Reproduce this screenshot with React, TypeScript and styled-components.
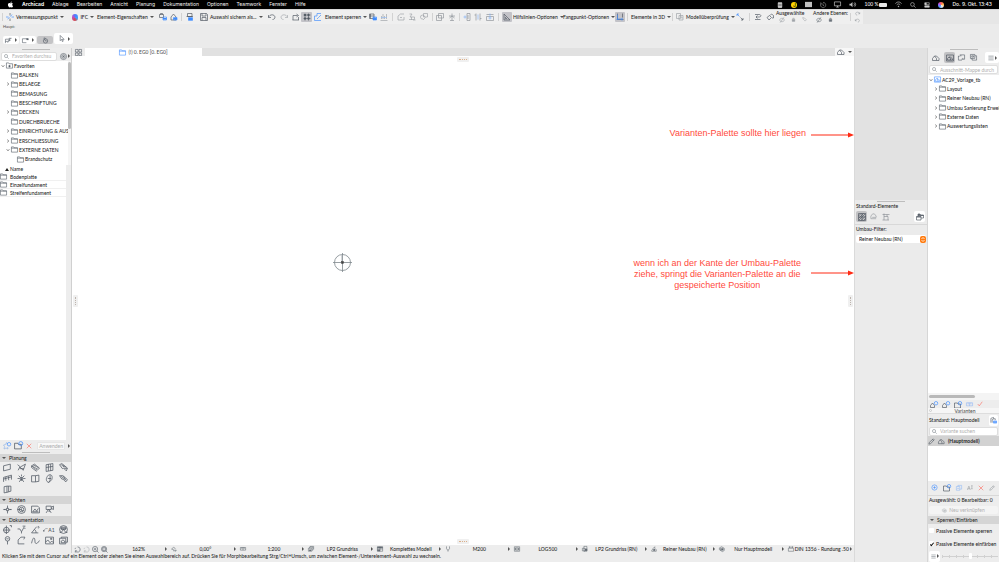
import React from "react";
import styled, { createGlobalStyle, css } from "styled-components";
import { FaApple } from "react-icons/fa";

const BLUE = "#3d8bff";
const RED = "#ff4a3d";
const INK = "#4b545e";

const GlobalStyle = createGlobalStyle`
  *, *::before, *::after { box-sizing: border-box; }
  html, body { margin: 0; height: 100%; overflow: hidden; }
  body { background: #ebebeb; color: #262626; font: 500 5px/6px Lato, "Noto Sans", sans-serif; }
  button, input, select { font: inherit; color: inherit; margin: 0; padding: 0; border: 0; background: none; }
  button { display: flex; align-items: center; white-space: nowrap; }
  ul { list-style: none; margin: 0; padding: 0; }
`;

/* ---------- icons ---------- */

type Glyph = { d?: string; f?: string; a?: string; af?: string };

const plus = "M12 1a3.5 3.5 0 1 1 0 7a3.5 3.5 0 1 1 0-7z";

const glyphs: Record<string, Glyph> = {
  survey: { d: "M8 0v5M8 11v5", a: "M0 8h5M11 8h5M12 3l-3 4M3 12l4-3" },
  link: { d: "M1 3h8v6H1zM3 3V1h4v2", a: "M8 8h7v6H8z", af: "M8 10h7v3H8z" },
  linkHouse: { d: "M2 8l5-6 5 6v6H2z", a: "M7 9h7v5H7z", af: "M7 10h7v3H7z" },
  stack: { d: "M3 1h9v6H3zM1 7h13", a: "M5 9h8v6H5z", af: "M5 10h8v4H5z" },
  save: { d: "M1 1h12l2 2v12H1zM4 1v5h8V1M4 15V9h8v6" },
  undo: { d: "M1 4v5h5M1 9c2-7 12-7 13-1c0 3-2 5-5 5" },
  redo: { d: "M15 4v5h-5M15 9C13 2 3 2 2 8c0 3 2 5 5 5" },
  pick: { d: "M1 14h13M2 14V5h9M9 2l4 3-4 3M13 8v6" },
  grid: { d: "M1 4h14M1 11h14M4 1v14M11 1v14", f: "M2 2h4v4H2zM9 2h4v4H9zM2 9h4v4H2zM9 9h4v4H9z" },
  blueEdit: { a: "M1 15V6h5V1h8M1 15h13M9 9l5-5M6 12l3-3" },
  lock: { d: "M1 2h9v9H1zM3 2v9M1 6h9", a: "M8 8h7v6H8z", af: "M8 9h7v5H8z" },
  chartBars: { d: "M1 15h14M3 12V6M6 12V2M9 12V6M13 12V2", a: "M2 9h12" },
  shape1: { d: "M2 14V6l5-4h7M2 14h12V8M6 9h4" },
  shape2: { d: "M3 2h5l-4 6h9v5H2M7 8v6M10 14h5" },
  shape3: { d: "M7 1h8v7H7zM9 8a4 4 0 1 0-3 4M6 14l5-5" },
  boxes: { d: "M5 1h10v9H5zM1 5h10v10H1z" },
  star: { d: "M8 1v14M2 6h12M4 15h8M3 10l5-4 5 4" },
  alignL: { d: "M8 1h6v14H8zM10 4v8", a: "M1 8h6M4 5v6" },
  alignC: { d: "M4 1v14M12 1v14M1 4h3M12 11h3", a: "M8 3v10" },
  alignR: { d: "M1 7h14v8H1zM1 3h14", a: "M8 1v12M5 10h6" },
  ruler: { d: "M2 2v12h12zM5 8v3h3" },
  snap: { d: "M3 1v12h12M13 1v8", a: "M3 12h11M3 3v9M12 11v4M1 13h4" },
  check3d: { d: "M1 1h8v10H1zM6 5h8v9H6zM9 8h3v3" },
  arrows: { d: "M9 9l5 5M10 14h4v-4", a: "M2 2l5 5M2 6V2h4" },
  layers: { d: "M2 3h8c5 0 5 5 0 5H4M7 5L4 8l3 3M2 13h11" },
  layers2: { d: "M2 9l5-4 4 4-5 5zM8 5l3-3 4 3v5h-3" },
  eye: { d: "M1 8c4-6 10-6 14 0c-4 6-10 6-14 0zM3 15L13 1" },
  padlock: { d: "M4 7h8v7H4zM6 7V4h4v3", f: "M4 8h8v6H4z" },
  tag: { d: "M2 2l6 1 6 6-4 4-6-6z" },
  select: { d: "M1 14V5h7M1 10h6M15 3H9v6l4-2M12 3l-6 10" },
  marquee: { d: "M1 4h12M1 13h9M1 4v9M13 4v3", f: "M10 3h5v4h-5z" },
  timer: { d: "M8 4a5 5 0 1 1 0 10a5 5 0 1 1 0-10zM8 9l-4-7M8 9h3M6 1l2 3" },
  cursor: { d: "M5 1v12l3-3 2 5 2-1-2-4h4z" },
  search: { d: "M6.500 1.500a5 5 0 1 1 0 10a5 5 0 1 1 0-10zM10.500 10.500l4.500 4.500" },
  gear: { d: "M8 1a7 7 0 1 1 0 14a7 7 0 1 1 0-14zM8 4a4 4 0 1 1 0 8a4 4 0 1 1 0-8zM8 6v4M6 8h4" },
  folder: { d: "M1 2h5l1 2h8v10H1zM1 5h14" },
  folderStar: { d: "M1 2h5l1 2h8v10H1zM8 7v5M6 9h4", f: "M6 8h4v4H6z" },
  quad: { d: "M1 1h6v6H1zM9 1h6v6H9zM1 9h6v6H1zM9 9h6v6H9z" },
  house: { d: "M1 13V9l4-5 4 5v4zM5 4h4l5 5v4H9" },
  houseBox: { d: "M1 2h14v12H1zM3 12V9l3-3 3 3v3zM6 6h3l4 4v2H9" },
  layoutBox: { d: "M4 2h11v10H8M1 4v10h8M1 7l3-3h4M11 9v3" },
  copies: { d: "M1 1h10v9H1zM5 10v4h10V4h-4M3 12v-2M4 4h4v3H4z" },
  menu: { d: "M1 3h14M1 8h14M1 13h14" },
  hatch: { d: "M1 1h14v14H1zM1 6l5-5M1 11L11 1M1 15L15 1M6 15l9-9M11 15l4-4M1 8h14M8 1v14" },
  demo: { d: "M2 13V7l4-5h4l4 5v3M2 13h12M5 10h9" },
  crane: { d: "M1 3h14M4 1v13M4 7h8v7M1 14h13M10 3v4" },
  folders: { d: "M1 7h9v7H1zM4 7V2h4l1 2h6v6h-5", f: "M1 7h9v2H1zM4 2h4l1 2h6v2H4z" },
  wall: { d: "M1 5l12-3v9L1 14z" },
  beam: { d: "M1 3l5 4 9-5-4 11-6-6-3 6M5 10h7" },
  slab: { d: "M1 5l5-3 9 7-4 4zM1 5v3l9 7M3 6l5-2M6 8l4-2M9 10l4-2" },
  window: { d: "M2 3l12-2v12L2 15zM6 2v12M10 2v12M2 8l12-2" },
  stair: { d: "M1 3l4-2 10 8-2 5L8 9 6 10zM4 3l5 4M7 3l5 5M9 9l5 1" },
  fence: { d: "M1 14V6l14-4v8M5 12V5M10 11V4M1 9l14-4" },
  lamp: { d: "M8 6v5M3 3l3 3M13 3l-3 3M1 8h4M11 8h4M8 1v3M4 14l2-3h4l2 3M6 6h4v4H6z" },
  door: { d: "M1 3h7v11H1zM8 3l6-1v11l-6 1" },
  shell: { d: "M6 2c6-3 8 3 6 8l-5 5c-6-1-6-8-1-13zM9 2v9l-2 4M5 8h6" },
  roof: { d: "M1 3h6l8 7-3 4-5-5H5zM4 4l7 6M8 4l4 7" },
  corner: { d: "M2 3l5-1v11l-5 1zM7 2h7v9l-7 2M10 2v10" },
  section: { d: "M8 1v5M8 10v5M1 8h5M10 8h5M6 6h4v4H6zM2 7v2M14 7v2" },
  spiral: { d: "M8 1a7 7 0 1 1 0 14a7 7 0 1 1 0-14zM8 4a4 4 0 1 1 0 8a4 4 0 1 1 0-8M1 8h6M8 6v4h3" },
  elevation: { d: "M1 2h11l3 3v9H1zM3 12l4-5 3 4 3-5M3 12h10" },
  camera: { d: "M2 2h9v6H2zM11 4l4-2v6l-4-2M6 8l-4 6M7 8l4 6M6 11h3" },
  target: { d: "M6 4a5 5 0 1 1 0 10a5 5 0 1 1 0-10zM6 1v15M0 9h13M12 1h3v3" },
  level: { d: "M1 7h4l3 5 5-9M8 12v3M10 2h5M13 6h2" },
  angle: { d: "M1 14L10 3M1 14h12M9 14c0-3-1-5-3-6M12 3c3-2 3 4 0 2" },
  zone: { d: "M1 13h3l4-5 4 5h3M3 6h10M8 1a7 7 0 1 1 0 14a7 7 0 1 1 0-14zM4 4h8v4H4z" },
  label: { d: "M1 12l8-7h6", f: "M0 10h5v4H0z" },
  pin: { d: "M8 1a4 4 0 1 1 0 8a4 4 0 1 1 0-8zM8 9v6M6 5h4" },
  poly: { d: "M2 14V7l5-5h7M2 14h11M14 2l-2 4" },
  spline: { d: "M1 13c3-14 6-10 6-4s4 6 8-1" },
  figure: { d: "M1 2h14v12H1zM1 11l4-4 4 5 3-3 3 3M10 4h2v2h-2z" },
  drawing: { d: "M1 4h11v10H1zM4 4V2h11v9h-3M4 12V9l3-2 3 2v3z" },
  star2: { d: "M2 14l1-5-2-3 4-1 2-4 2 4M2 14l4-2 4 2-1-4", a: plus },
  folderPlus: { d: "M1 4h6l1 2h5v8H1z", a: plus },
  cross: { d: "M2 2l12 12M14 2L2 14" },
  zoomUndo: { d: "M8 2a6 6 0 1 1-5 9M3 11v4M3 11h4M4 4L2 7" },
  zoomIn: { d: "M7 1a6 6 0 1 1 0 12a6 6 0 1 1 0-12zM11 11l4 4M7 4v6M4 7h6" },
  zoomFit: { d: "M7 1a6 6 0 1 1 0 12a6 6 0 1 1 0-12zM11 11l4 4M4 4h6v6H4z" },
  rotate: { d: "M2 9c2-7 9-7 9 0M2 9h4M8 13l6-2-2 4M7 9v5" },
  scale: { d: "M1 4h14v7H1zM5 4v4M11 4v4M8 4v7" },
  sheets: { d: "M1 6h9v8H1zM4 6V3h9v8h-3M6 3V1h9v8", f: "M3 9h5v4H3z" },
  table: { d: "M1 2h14v12H1zM1 8h14M8 2v12", f: "M1 2h14v4H1zM1 9h7v5H1z" },
  pen: { d: "M4 1v6l3 4h2l3-4V1M8 11v4" },
  book: { d: "M1 2h14v12H1zM4 5h8v6H4zM1 8h14" },
  lockDoc: { d: "M5 1h8v13H5zM1 6h7v7H1z", f: "M8 7h6v6H8z" },
  hook: { d: "M2 14h12v-4l-4-4V2L6 6l-4 6z", f: "M6 8h5v5H6z" },
  leaf: { d: "M1 5l6-3 7 4v6l-5 3-8-5zM4 6h7v5H4z", f: "M6 7h5v4H6z" },
  dim: { d: "M1 6h14v8H1zM4 1v4M12 1v4M2 3h12" },
  pencil: { d: "M2 14l1-4 9-8 2 2-8 9zM10 3l3 3" },
  plusCircle: { a: "M8 2a6 6 0 1 1 0 12a6 6 0 1 1 0-12zM8 5v6M5 8h6" },
  dup: { a: "M1 4h9v10H1zM5 4V1h10v10h-5M3 9h5" },
  rename: { d: "M1 13l4-10 4 10M2 10h6M11 2h4M13 2v8M11 10h4" },
  housePlus: { d: "M1 13V9l4-5 4 5v4z", a: plus },
  copyPlus: { d: "M2 13V3l6-2v3M5 13V6l4-2h3v3", a: "M8 9h7v5H8z", af: "M8 10h7v3H8z" },
  monitor: { d: "M1 2h14v9H1zM5 14h6M8 11v3" },
  clock: { d: "M8 1a7 7 0 1 1-6 4M8 4v5l3 1M2 1v4h4" },
  volume: { d: "M11 5c2 2 2 4 0 6M13 3c3 3 3 7 0 10", f: "M1 6h3l4-4v12l-4-4H1z" },
  wifi: { d: "M1 6c4-5 10-5 14 0M4 9c3-3 5-3 8 0M7 12h2v1H7z" },
  control: { d: "M2 2h12v5H2zM2 10h12v4H2z", f: "M2 10h12v4H2zM2 2h5v5H2z" },
  disk: { d: "M3 2h10v12H3z", f: "M3 1h10v4H3zM3 6h10v3H3zM3 10h10v5H3z" },
  keyboard: { f: "M0 2h16v12H0z" },
  tick: { d: "M2 8l4 5 8-11" },
};

const Svg = styled.svg<{ $c?: string; $o?: number; $s: number }>`
  flex: none;
  display: block;
  width: ${(p) => p.$s}px;
  height: ${(p) => p.$s}px;
  color: ${(p) => p.$c || INK};
  opacity: ${(p) => p.$o ?? 1};
  overflow: visible;
`;

function Icon({ n, s = 8, c, o }: { n: string; s?: number; c?: string; o?: number }) {
  const g = glyphs[n];
  return (
    <Svg viewBox="0 0 16 16" $s={s} $c={c} $o={o} fill="none" strokeWidth={1.3} aria-hidden>
      {g.f && <path d={g.f} fill="currentColor" opacity={0.8} />}
      {g.d && <path d={g.d} stroke="currentColor" />}
      {g.af && <path d={g.af} fill={BLUE} />}
      {g.a && <path d={g.a} stroke={BLUE} />}
    </Svg>
  );
}

const Caret = styled.i<{ $right?: boolean }>`
  flex: none;
  width: 0;
  height: 0;
  border: solid transparent;
  ${(p) =>
    p.$right
      ? css`border-width: 2px 0 2px 2px; border-left-color: #555;`
      : css`border-width: 2px 2px 0 2px; border-top-color: #555;`}
`;

/* ---------- menu bar ---------- */

const Page = styled.div`
  height: 100vh;
  display: flex;
  flex-direction: column;
  overflow: hidden;
`;
const MenuBar = styled.header`
  flex: none;
  height: 9px;
  padding: 0 7px;
  display: flex;
  align-items: center;
  justify-content: space-between;
  background: #000;
  color: #f4f4f4;
  font-family: Inter, sans-serif;
  line-height: 9px;
`;
const Menus = styled.nav`
  display: flex;
  align-items: center;
  gap: 8px;
`;
const MenuItem = styled.button<{ $bold?: boolean }>`
  font-weight: ${(p) => (p.$bold ? 700 : 400)};
`;
const Tray = styled.div`
  display: flex;
  align-items: center;
  gap: 8px;
`;
const Badge = styled.span`
  width: 6px;
  height: 6px;
  border-radius: 50%;
  background: #ffd500;
  color: #000;
  line-height: 6px;
  text-align: center;
`;
const Charge = styled.span`
  display: flex;
  align-items: center;
  gap: 1px;
  font-family: Lato, sans-serif;
`;
const Battery = styled.i`
  width: 8px;
  height: 4px;
  border-radius: 1px;
  background: #e8e8e8;
`;
const Orb = styled.i`
  width: 6px;
  height: 6px;
  border-radius: 50%;
  background: conic-gradient(#ff5a5a, #ffb54a, #f5f5f5, #4aa8ff, #a45cff, #ff5a5a);
`;

const menus = ["Ablage", "Bearbeiten", "Ansicht", "Planung", "Dokumentation", "Optionen", "Teamwork", "Fenster", "Hilfe"];

function TopMenu() {
  return (
    <MenuBar>
      <Menus>
        <FaApple size={7} color="#fff" />
        <MenuItem $bold>Archicad</MenuItem>
        {menus.map((m) => (
          <MenuItem key={m}>{m}</MenuItem>
        ))}
      </Menus>
      <Tray>
        <Icon n="disk" s={6} c="#eee" />
        <Badge>J</Badge>
        <Icon n="keyboard" s={7} c="#eee" />
        <Icon n="clock" s={6} c="#bbb" />
        <Icon n="monitor" s={7} c="#eee" />
        <Icon n="volume" s={7} c="#eee" />
        <Charge>
          100 %<Battery />
        </Charge>
        <Icon n="wifi" s={7} c="#eee" />
        <Icon n="search" s={6} c="#eee" />
        <Icon n="control" s={6} c="#eee" />
        <Orb />
        <time>Do. 9. Okt. 13:43</time>
      </Tray>
    </MenuBar>
  );
}

/* ---------- toolbar ---------- */

const Toolbar = styled.div`
  flex: none;
  height: 15px;
  display: flex;
  align-items: center;
  background: #e6e6e6;
  border-top: 1px solid #d8d8d8;
`;
const ToolStrip = styled.div`
  display: flex;
  align-items: center;
  height: 14px;
  padding-right: 3px;
  background: #efefef;
`;
const ToolCell = styled.button<{ $w: number; $on?: boolean; $label?: boolean }>`
  flex: none;
  width: ${(p) => p.$w}px;
  height: 10px;
  gap: 2px;
  justify-content: ${(p) => (p.$label ? "flex-start" : "center")};
  border-radius: 1px;
  background: ${(p) => (p.$on ? "#c3c3c8" : "transparent")};
  ${Caret} { margin-left: auto; }
`;
const Rule = styled.i<{ $w: number }>`
  flex: none;
  width: ${(p) => p.$w}px;
  height: 8px;
  background: linear-gradient(#d2d2d2, #d2d2d2) center / 1px 100% no-repeat;
`;
const Space = styled.i<{ $w: number }>`
  flex: none;
  width: ${(p) => p.$w}px;
`;
const Layered = styled.div<{ $w: number }>`
  flex: none;
  width: ${(p) => p.$w}px;
  height: 14px;
  line-height: 6px;
  white-space: nowrap;
`;
const LayeredIcons = styled.div`
  display: flex;
  padding-left: 3px;
  gap: 6px;
  margin-top: 1px;
`;
const Turns = styled.div`
  display: flex;
  flex-direction: column;
  gap: 2px;
  padding-left: 3px;
`;
const IfcDot = styled.i`
  width: 7px;
  height: 7px;
  border-radius: 50%;
  background: conic-gradient(#4d7dff, #38a5ff 30%, #d84a4a 50%, #c04fc7 80%, #4d7dff);
`;

type Tool = { k: "i" | "t" | "r" | "s"; w: number; n?: string; t?: string; on?: boolean; o?: number };
const i = (n: string, w = 12, o = 1, on = false): Tool => ({ k: "i", n, w, o, on });
const t = (text: string, w: number, n?: string): Tool => ({ k: "t", t: text, w, n });
const r = (w = 4): Tool => ({ k: "r", w });
const s = (w: number): Tool => ({ k: "s", w });

const tools: Tool[] = [
  r(4), s(2), t("Vermessungspunkt", 56, "survey"), s(10),
  t("IFC", 22, "ifc"), s(3), t("Element-Eigenschaften", 54), s(6),
  i("link"), i("linkHouse", 10), r(5), i("stack"), s(4), t("Auswahl sichern als...", 60, "save"), s(6),
  i("undo"), i("redo", 12, 0.45), i("pick", 11), i("grid", 11, 1, true), i("blueEdit"), s(1),
  t("Element sperren", 40), s(2), i("lock", 11), i("chartBars", 12, 0.5), r(5),
  i("shape1", 11, 0.5), i("shape2", 12, 0.5), i("shape3", 12, 0.5), r(4),
  i("boxes", 12, 0.6), i("star", 11, 0.6), r(4), i("alignL", 11, 0.6), i("alignC", 12, 0.6), i("alignR", 12, 0.6), r(5), s(1),
  i("ruler", 10, 1, true), s(1), t("Hilfslinien-Optionen", 48), s(2), t("Fangpunkt-Optionen", 49), s(3),
  i("snap", 10, 1, true), r(5), s(1), t("Elemente in 3D", 37), r(8), t("Modellüberprüfung", 56, "check3d"), s(2), i("arrows"), r(6),
  i("layers"), i("layers2", 11), s(1),
];

function ToolView({ tool }: { tool: Tool }) {
  if (tool.k === "r") return <Rule $w={tool.w} />;
  if (tool.k === "s") return <Space $w={tool.w} />;
  if (tool.k === "i")
    return (
      <ToolCell $w={tool.w} $on={tool.on} aria-label={tool.n}>
        <Icon n={tool.n!} s={8} o={tool.o} />
      </ToolCell>
    );
  return (
    <ToolCell $w={tool.w} $label>
      {tool.n === "ifc" ? <IfcDot /> : tool.n && <Icon n={tool.n} s={8} o={tool.n === "check3d" ? 0.5 : 1} />}
      {tool.t}
      <Caret />
    </ToolCell>
  );
}

const MainTools = styled.section`
  flex: none;
  height: 24px;
  color: #555;
`;
const MainTitle = styled.div`
  padding-left: 3px;
  font-size: 4px;
  line-height: 6px;
`;
const MainRow = styled.div`
  display: flex;
  align-items: center;
  gap: 1px;
  padding: 2px 0 0 3px;
  height: 18px;
`;
const ModeButton = styled.button<{ $on?: boolean; $tall?: boolean }>`
  width: ${(p) => (p.$tall ? 19 : 16)}px;
  height: ${(p) => (p.$tall ? 11 : 8)}px;
  justify-content: center;
  gap: 3px;
  border-radius: 2px;
  background: ${(p) => (p.$on ? "#c4c4c6" : "#fff")};
  margin-bottom: ${(p) => (p.$tall ? 3 : 0)}px;
`;

/* ---------- shared palette parts ---------- */

const Workspace = styled.main`
  flex: 1;
  min-height: 0;
  display: grid;
  grid-template-columns: minmax(0, 1fr) 73px 72px;
`;
const Grip = styled.i`
  flex: none;
  display: block;
  width: 28px;
  height: 1px;
  margin: 1px auto;
  background: #bdbdbd;
`;
const SearchBox = styled.label`
  flex: 1;
  min-width: 0;
  height: 9px;
  display: flex;
  align-items: center;
  gap: 3px;
  padding: 0 2px;
  border: 1px solid #dedede;
  border-radius: 2px;
  background: #fff;
`;
const SearchInput = styled.input`
  flex: 1;
  min-width: 0;
  height: 7px;
  outline: none;
  font-weight: 400;
  &::placeholder { color: #aeaeae; opacity: 1; }
`;
const Bar = styled.div<{ $pad?: string; $gap?: number; $h: number }>`
  flex: none;
  display: flex;
  align-items: center;
  gap: ${(p) => p.$gap ?? 2}px;
  padding: ${(p) => p.$pad ?? "0 1px"};
  height: ${(p) => p.$h}px;
  white-space: nowrap;
`;
const SectionHead = styled.button`
  flex: none;
  width: 100%;
  height: 8px;
  gap: 3px;
  padding-left: 2px;
  background: #d5d5d5;
`;
const IconButton = styled.button<{ $on?: boolean; $white?: boolean; $w?: number }>`
  width: ${(p) => p.$w ?? 11}px;
  height: 11px;
  justify-content: center;
  gap: 1px;
  border-radius: 2px;
  background: ${(p) => (p.$on ? "#c2c2c4" : p.$white ? "#fff" : "transparent")};
`;

const TreeRow = styled.li<{ $level: number }>`
  flex: 1;
  display: flex;
  align-items: center;
  gap: 1px;
  min-height: 0;
  padding-left: ${(p) => [1, 6, 12][p.$level]}px;
  white-space: nowrap;
`;
const Turn = styled.svg<{ $open?: boolean; $none?: boolean }>`
  flex: none;
  width: 4px;
  height: 4px;
  visibility: ${(p) => (p.$none ? "hidden" : "visible")};
  transform: rotate(${(p) => (p.$open ? 90 : 0)}deg);
`;

type Node = { t: string; lvl: number; st?: "open" | "closed"; n?: string };

function Tree({ nodes }: { nodes: Node[] }) {
  return (
    <>
      {nodes.map((x) => (
        <TreeRow key={x.t} $level={x.lvl}>
          <Turn viewBox="0 0 4 4" $open={x.st === "open"} $none={!x.st} fill="none" stroke="#666" strokeWidth="0.6" aria-hidden>
            <path d="M1 0.500L3 2 1 3.500" />
          </Turn>
          <Icon n={x.n ?? "folder"} s={7} c={x.n === "houseBox" ? BLUE : undefined} />
          {x.t}
        </TreeRow>
      ))}
    </>
  );
}

/* ---------- left palette ---------- */

const DrawArea = styled.div`
  display: flex;
  flex-direction: column;
  min-height: 0;
`;
const DrawRow = styled.div`
  flex: 1;
  min-height: 0;
  display: grid;
  grid-template-columns: 72px minmax(0, 1fr);
`;
const Left = styled.aside`
  display: flex;
  flex-direction: column;
  min-height: 0;
  padding-bottom: 6px;
  border-right: 1px solid #d0d0d0;
  background: #ededed;
`;
const TreeFrame = styled.div`
  flex: none;
  height: 104px;
  display: flex;
  background: #fff;
`;
const TreeList = styled.ul`
  flex: 1;
  min-width: 0;
  height: 103px;
  display: flex;
  flex-direction: column;
`;
const ScrollTrack = styled.div`
  width: 3px;
  padding: 1px 0 0;
  background: #f5f5f5;
`;
const ScrollThumb = styled.i`
  display: block;
  width: 3px;
  height: 67px;
  border-radius: 2px;
  background: #bcbcbc;
`;
const FileList = styled.div`
  flex: 1;
  min-height: 0;
  margin-right: 5px;
  background: #fff;
`;
const NameHead = styled.div`
  display: flex;
  align-items: center;
  gap: 1px;
  height: 8px;
  padding-left: 5px;
`;
const UpMark = styled.i`
  border: solid transparent;
  border-width: 0 2px 3px;
  border-bottom-color: #222;
`;
const FileRow = styled.div`
  display: flex;
  align-items: center;
  gap: 3px;
  height: 8px;
  border-bottom: 1px solid #f0f0f0;
`;
const ApplyButton = styled.button`
  height: 8px;
  padding: 0 1px;
  margin-left: auto;
  border: 1px solid #e6e6e6;
  border-radius: 1px;
  background: #f9f9f9;
  color: #b0b0b0;
`;
const ToolGrid = styled.div<{ $rows: number }>`
  flex: none;
  display: grid;
  grid-template-columns: repeat(5, 14px);
  grid-auto-rows: 11px;
  height: ${(p) => p.$rows * 11 + 1}px;
`;
const ToolTile = styled.button`
  justify-content: center;
  height: 11px;
  color: ${INK};
`;

const favorites: Node[] = [
  { t: "Favoriten", lvl: 0, st: "open", n: "folderStar" },
  { t: "BALKEN", lvl: 1 },
  { t: "BELAEGE", lvl: 1, st: "closed" },
  { t: "BEMASUNG", lvl: 1 },
  { t: "BESCHRIFTUNG", lvl: 1 },
  { t: "DECKEN", lvl: 1, st: "closed" },
  { t: "DURCHBRUECHE", lvl: 1 },
  { t: "EINRICHTUNG & AUS", lvl: 1, st: "closed" },
  { t: "ERSCHLIESSUNG", lvl: 1, st: "closed" },
  { t: "EXTERNE DATEN", lvl: 1, st: "open" },
  { t: "Brandschutz", lvl: 2 },
];

const toolSets = [
  { title: "Planung", rows: 3, items: ["wall", "beam", "slab", "window", "stair", "fence", "lamp", "door", "shell", "roof", "corner"] },
  { title: "Sichten", rows: 1, items: ["section", "spiral", "elevation", "camera"] },
  { title: "Dokumentation", rows: 2, items: ["target", "level", "angle", "label", "zone", "pin", "poly", "spline", "figure", "drawing"] },
];

function LeftPalette() {
  return (
    <Left>
      <Grip />
      <Bar $h={10}>
        <SearchBox>
          <Icon n="search" s={5} />
          <SearchInput placeholder="Favoriten durchsu" aria-label="Favoriten durchsuchen" />
        </SearchBox>
        <IconButton aria-label="Einstellungen">
          <Icon n="gear" s={7} />
          <Caret $right />
        </IconButton>
      </Bar>
      <TreeFrame>
        <TreeList>
          <Tree nodes={favorites} />
        </TreeList>
        <ScrollTrack>
          <ScrollThumb />
        </ScrollTrack>
      </TreeFrame>
      <FileList>
        <NameHead>
          <UpMark />
          Name
        </NameHead>
        {["Bodenplatte", "Einzelfundament", "Streifenfundament"].map((f) => (
          <FileRow key={f}>
            <Icon n="folder" s={7} />
            {f}
          </FileRow>
        ))}
      </FileList>
      <Bar $h={11} $pad="0 1px 0 3px" $gap={3}>
        <Icon n="star2" s={8} c="#8fb3e6" />
        <Icon n="folderPlus" s={9} />
        <Icon n="cross" s={6} c={RED} />
        <ApplyButton>Anwenden</ApplyButton>
        <Caret $right />
      </Bar>
      <Grip />
      {toolSets.map((set) => (
        <React.Fragment key={set.title}>
          <SectionHead>
            <Caret />
            {set.title}
          </SectionHead>
          <ToolGrid $rows={set.rows}>
            {set.items.map((n) => (
              <ToolTile key={n} aria-label={n}>
                <Icon n={n} s={n === "label" ? 5 : 9} />
                {n === "label" && "A1"}
              </ToolTile>
            ))}
          </ToolGrid>
        </React.Fragment>
      ))}
    </Left>
  );
}

/* ---------- drawing canvas ---------- */

const Center = styled.section`
  display: flex;
  flex-direction: column;
  min-height: 0;
  min-width: 0;
`;
const Tabs = styled.div`
  flex: none;
  height: 8px;
  display: flex;
  background: #e1e1e1;
`;
const TabIcons = styled.button`
  width: 13px;
  justify-content: center;
  background: #ececec;
`;
const Tab = styled.button`
  width: 117px;
  justify-content: center;
  gap: 2px;
  background: #fff;
  color: #555;
`;
const TabEnd = styled.button`
  width: 19px;
  margin-left: auto;
  gap: 3px;
  justify-content: center;
  background: #f7f7f7;
`;
const Sheet = styled.div`
  flex: 1;
  min-height: 0;
  position: relative;
  background: #fff;
`;
const Handle = styled.i<{ $side: "top" | "bottom" | "left" | "right" }>`
  position: absolute;
  border-radius: 1px;
  background: #f0f0f0;
  ${(p) => p.$side}: 1px;
  ${(p) =>
    p.$side === "top" || p.$side === "bottom"
      ? css`left: 50%; width: 12px; height: 5px; margin-left: -6px;`
      : css`top: 50%; width: 5px; height: 12px; margin-top: -6px;`}
  &::after {
    content: "";
    position: absolute;
    inset: 2px;
    ${(p) =>
      p.$side === "top" || p.$side === "bottom"
        ? css`border-top: 1px dotted #dcb08a;`
        : css`border-left: 1px dotted #bdb4ad;`}
  }
`;
const Origin = styled.svg`
  position: absolute;
  left: 260px;
  top: 196px;
  width: 20px;
  height: 20px;
`;
const Note = styled.div<{ $top: number; $center?: boolean }>`
  position: absolute;
  right: 0;
  top: ${(p) => p.$top}px;
  display: flex;
  align-items: center;
  gap: ${(p) => (p.$center ? 10 : 5)}px;
  color: ${RED};
  font: 400 9px/11px "Liberation Sans", Arial, sans-serif;
  white-space: pre-line;
  text-align: center;
`;
const NoteArrow = styled.svg<{ $up?: boolean }>`
  width: 43px;
  height: 6px;
  margin: ${(p) => (p.$up ? "0 0 3px" : "3px 0 0")};
`;

function RedArrow({ up }: { up?: boolean }) {
  return (
    <NoteArrow viewBox="0 0 43 6" $up={up} aria-hidden>
      <path d="M0 3h38" stroke="#ff2b14" strokeWidth="1.2" />
      <path d="M37 0.500l6 2.500-6 2.500z" fill="#ff2b14" />
    </NoteArrow>
  );
}

const Status = styled.div`
  flex: none;
  height: 8px;
  display: flex;
  align-items: center;
  background: #ededed;
`;
const ZoomTools = styled.div`
  width: 38px;
  display: flex;
  gap: 2px;
  padding-left: 2px;
`;
const StatusCell = styled.button<{ $grow: number }>`
  flex: ${(p) => p.$grow} 1 0;
  min-width: 0;
  height: 8px;
  padding: 0 2px;
`;
const StatusText = styled.span`
  flex: 1;
  text-align: center;
`;
const Hint = styled.footer`
  flex: none;
  height: 9px;
  padding-left: 2px;
  white-space: nowrap;
  background: #ededed;
`;

const statuses: [string, string][] = [
  ["rotate", "0,00°"],
  ["scale", "1:200"],
  ["sheets", "LP2 Grundriss"],
  ["table", "Komplettes Modell"],
  ["pen", "M200"],
  ["book", "LOG500"],
  ["lockDoc", "LP2 Grundriss (RN)"],
  ["hook", "Reiner Neubau (RN)"],
  ["leaf", "Nur Hauptmodell"],
  ["dim", "DIN 1356 - Rundung .50"],
];

function Canvas() {
  return (
    <Center>
      <Tabs>
        <TabIcons aria-label="Übersicht">
          <Icon n="quad" s={7} />
        </TabIcons>
        <Tab>
          <Icon n="folder" s={7} c={BLUE} />
          (!) 0. EG0 [0. EG0]
        </Tab>
        <TabEnd aria-label="Ansicht">
          <Icon n="house" s={8} />
          <Caret />
        </TabEnd>
      </Tabs>
      <Sheet>
        <Handle $side="top" />
        <Handle $side="bottom" />
        <Handle $side="left" />
        <Handle $side="right" />
        <Origin viewBox="0 0 20 20" fill="none" stroke="#7d868c">
          <circle cx="10.500" cy="10.500" r="8" strokeWidth="0.8" />
          <path d="M1 10.500h19M10.500 1v19" strokeWidth="0.8" />
          <path d="M9.500 2v8" stroke="#b5bbbf" strokeWidth="0.6" />
          <rect x="9.500" y="9.500" width="2" height="2" fill="#444" stroke="#444" strokeWidth="0.5" />
        </Origin>
        <Note $top={72}>
          Varianten-Palette sollte hier liegen
          <RedArrow />
        </Note>
        <Note $top={202} $center>
          {"wenn ich an der Kante der Umbau-Palette\nziehe, springt die Varianten-Palette an die\ngespeicherte Position"}
          <RedArrow up />
        </Note>
      </Sheet>
      <Status>
        <ZoomTools>
          <Icon n="zoomUndo" s={7} />
          <Icon n="zoomUndo" s={7} o={0.4} />
          <Icon n="zoomIn" s={7} />
          <Icon n="zoomFit" s={7} />
        </ZoomTools>
        <StatusCell $grow={59}>
          <StatusText>162%</StatusText>
          <Caret $right />
        </StatusCell>
        {statuses.map(([n, label]) => (
          <StatusCell key={label} $grow={69}>
            <Icon n={n} s={6} />
            <StatusText>{label}</StatusText>
            <Caret $right />
          </StatusCell>
        ))}
      </Status>
    </Center>
  );
}

/* ---------- renovation palette ---------- */

const Dock = styled.aside`
  display: flex;
  flex-direction: column;
  background: #ebebeb;
  border-left: 1px solid #dadada;
`;
const DockGap = styled.div`
  flex: none;
  height: 152px;
  background: #e2e2e2;
`;
const Caption = styled.h2`
  flex: none;
  margin: 0;
  padding: 0 1px;
  font: inherit;
  line-height: 7px;
  white-space: nowrap;
`;
const Divider = styled.hr`
  flex: none;
  width: 100%;
  height: 1px;
  margin: 1px 0;
  border: 0;
  background: #d8d8d8;
`;
const FilterField = styled.div`
  display: flex;
  align-items: center;
  height: 8px;
  margin: 2px 1px;
  border-radius: 2px;
  background: #fff;
  padding: 0 0 0 3px;
`;
const FilterSelect = styled.select`
  flex: 1;
  min-width: 0;
  height: 8px;
  appearance: none;
  outline: none;
`;
const Stepper = styled.svg`
  width: 6px;
  height: 7px;
  border-radius: 2px;
  background: #ff7b0f;
`;
const Push = styled.span`
  margin-left: auto;
`;

function Renovation() {
  return (
    <Dock>
      <DockGap />
      <Grip />
      <Caption>Standard-Elemente</Caption>
      <Bar $gap={1} $h={13} $pad="0 2px 0 1px">
        <IconButton $on aria-label="Bestand">
          <Icon n="hatch" s={8} />
        </IconButton>
        <IconButton aria-label="Abbruch">
          <Icon n="demo" s={7} o={0.6} />
        </IconButton>
        <IconButton aria-label="Neubau">
          <Icon n="crane" s={8} o={0.6} />
        </IconButton>
        <Push>
          <IconButton $white aria-label="Umbau-Filter öffnen">
            <Icon n="folders" s={8} />
          </IconButton>
        </Push>
      </Bar>
      <Divider />
      <Caption as="label" htmlFor="filter">
        Umbau-Filter:
      </Caption>
      <FilterField>
        <FilterSelect id="filter" defaultValue="rn">
          <option value="rn">Reiner Neubau (RN)</option>
        </FilterSelect>
        <Stepper viewBox="0 0 6 7" fill="none" stroke="#fff" strokeWidth="0.8" aria-hidden>
          <path d="M1.500 3L3 1.500 4.500 3M1.500 4L3 5.500 4.500 4" />
        </Stepper>
      </FilterField>
    </Dock>
  );
}

/* ---------- navigator and design options ---------- */

const Right = styled.aside`
  display: flex;
  flex-direction: column;
  min-height: 0;
  min-width: 0;
  border-left: 1px solid #d6d6d6;
  background: #ededed;
`;
const NavTree = styled.div`
  flex: 1;
  min-height: 0;
  background: #fff;
`;
const NavList = styled.ul`
  display: flex;
  flex-direction: column;
  height: 56px;
`;
const HScroll = styled.div`
  flex: none;
  height: 7px;
  padding: 2px 0;
  background: #f4f4f4;
`;
const HThumb = styled.i`
  display: block;
  width: 46px;
  height: 3px;
  margin-left: 1px;
  border-radius: 2px;
  background: #b9b9b9;
`;
const NavActions = styled.div`
  flex: none;
  display: flex;
  gap: 4px;
  height: 8px;
  padding: 1px 2px 0;
  overflow: hidden;
`;
const TitleBar = styled.div`
  flex: none;
  display: flex;
  align-items: center;
  height: 6px;
  padding: 0 1px;
  background: #f6f6f6;
  border-bottom: 1px solid #ddd;
`;
const CloseDot = styled.button`
  width: 3px;
  height: 3px;
  border: 1px solid #ccc;
  border-radius: 50%;
`;
const TitleText = styled.span`
  flex: 1;
  text-align: center;
  color: #555;
`;
const OptionList = styled.div`
  flex: none;
  height: 45px;
  background: #fff;
`;
const OptionRow = styled.div`
  display: flex;
  align-items: center;
  gap: 3px;
  height: 10px;
  background: #d2d2d2;
  font-weight: 700;
`;
const RelinkButton = styled.button`
  flex: none;
  height: 8px;
  margin: 2px 1px;
  gap: 2px;
  justify-content: center;
  border-radius: 2px;
  background: #f4f4f4;
  color: #b5b5b5;
`;
const CheckLine = styled.label`
  flex: none;
  display: flex;
  align-items: center;
  gap: 2px;
  height: 13px;
  padding-left: 1px;
  white-space: nowrap;
`;
const CheckBox = styled.input`
  appearance: none;
  display: grid;
  place-items: center;
  width: 5px;
  height: 5px;
  border-radius: 1px;
  background: #fff;
  &:checked::after {
    content: "";
    width: 2px;
    height: 4px;
    border: solid #111;
    border-width: 0 1px 1px 0;
    transform: rotate(40deg);
  }
`;
const Slider = styled.input`
  appearance: none;
  flex: 1;
  min-width: 0;
  height: 6px;
  background:
    linear-gradient(#d0d0d0, #d0d0d0) center / 100% 1px no-repeat,
    repeating-linear-gradient(90deg, #d0d0d0 0 1px, transparent 1px 7px) center / 100% 3px no-repeat;
  &::-webkit-slider-thumb {
    appearance: none;
    width: 3px;
    height: 6px;
    border-radius: 1px;
    background: #fff;
  }
`;

const views: Node[] = [
  { t: "AC29_Vorlage_tb", lvl: 0, st: "open", n: "houseBox" },
  { t: "Layout", lvl: 1, st: "closed" },
  { t: "Reiner Neubau (RN)", lvl: 1, st: "closed" },
  { t: "Umbau Sanierung Erweit", lvl: 1, st: "closed" },
  { t: "Externe Daten", lvl: 1, st: "closed" },
  { t: "Auswertungslisten", lvl: 1, st: "closed" },
];

function Navigator() {
  return (
    <Right>
      <Grip />
      <Bar $gap={1} $h={13} $pad="0">
        <IconButton aria-label="Projekt-Mappe" $w={15}>
          <Icon n="house" s={8} />
        </IconButton>
        <IconButton $on aria-label="Ausschnitt-Mappe">
          <Icon n="houseBox" s={8} />
        </IconButton>
        <IconButton aria-label="Layoutbuch">
          <Icon n="layoutBox" s={7} />
        </IconButton>
        <IconButton aria-label="Publisher">
          <Icon n="copies" s={7} />
        </IconButton>
        <Push>
          <IconButton $white $w={14} aria-label="Menü">
            <Icon n="menu" s={6} />
            <Caret $right />
          </IconButton>
        </Push>
      </Bar>
      <Bar $h={11}>
        <SearchBox>
          <Icon n="search" s={5} />
          <SearchInput placeholder="Ausschnitt-Mappe durch" aria-label="Ausschnitt-Mappe durchsuchen" />
        </SearchBox>
      </Bar>
      <NavTree>
        <NavList>
          <Tree nodes={views} />
        </NavList>
      </NavTree>
      <HScroll>
        <HThumb />
      </HScroll>
      <NavActions>
        <Icon n="housePlus" />
        <Icon n="housePlus" />
        <Icon n="folderPlus" />
        <Icon n="scale" c="#8db5f5" s={7} />
        <Icon n="tick" c={RED} s={6} />
      </NavActions>
      <TitleBar>
        <CloseDot aria-label="Schließen" />
        <TitleText>Varianten</TitleText>
      </TitleBar>
      <Bar $h={12}>
        Standard: Hauptmodell
        <Push>
          <IconButton $white $w={9} aria-label="Neue Variante">
            <Icon n="copyPlus" s={7} />
          </IconButton>
        </Push>
      </Bar>
      <Bar $h={10}>
        <SearchBox>
          <Icon n="search" s={5} />
          <SearchInput placeholder="Variante suchen" aria-label="Variante suchen" />
        </SearchBox>
      </Bar>
      <OptionList>
        <OptionRow>
          <Icon n="pencil" s={7} />
          <Icon n="house" s={7} />
          (Hauptmodell)
        </OptionRow>
      </OptionList>
      <Bar $h={13} $gap={5} $pad="0 3px">
        <Icon n="plusCircle" s={7} />
        <Icon n="folderPlus" s={8} />
        <Icon n="dup" s={6} o={0.6} />
        <Icon n="rename" s={6} o={0.6} />
        <Icon n="cross" s={6} c={RED} />
        <Icon n="pencil" s={6} o={0.6} />
      </Bar>
      <Divider />
      <Caption>Ausgewählt: 0 Bearbeitbar: 0</Caption>
      <RelinkButton disabled>
        <Icon n="leaf" s={5} o={0.4} />
        Neu verknüpfen
      </RelinkButton>
      <SectionHead>
        <Caret />
        Sperren/Einfärben
      </SectionHead>
      <CheckLine>
        <CheckBox type="checkbox" />
        Passive Elemente sperren
      </CheckLine>
      <CheckLine>
        <CheckBox type="checkbox" defaultChecked />
        Passive Elemente einfärben
      </CheckLine>
      <Bar $h={12}>
        <IconButton $white aria-label="Farbe">
          <Icon n="menu" s={5} />
          <Caret $right />
        </IconButton>
        <Slider type="range" defaultValue={50} aria-label="Deckkraft" />
      </Bar>
    </Right>
  );
}

export default function App() {
  return (
    <Page>
      <GlobalStyle />
      <TopMenu />
      <Toolbar>
        <ToolStrip>
          {tools.map((tool, k) => (
            <ToolView key={k} tool={tool} />
          ))}
          <Layered $w={37}>
            Ausgewählte
            <LayeredIcons>
              <Icon n="eye" s={6} o={0.6} />
              <Icon n="padlock" s={5} o={0.6} />
              <Icon n="tag" s={5} o={0.6} />
            </LayeredIcons>
          </Layered>
          <Layered $w={35}>
            Andere Ebenen:
            <LayeredIcons>
              <Icon n="eye" s={6} />
              <Icon n="padlock" s={5} />
            </LayeredIcons>
          </Layered>
          <Rule $w={4} />
          <Turns>
            <Icon n="redo" s={5} o={0.7} />
            <Icon n="undo" s={5} o={0.7} />
          </Turns>
        </ToolStrip>
      </Toolbar>
      <MainTools>
        <MainTitle>Haupt:</MainTitle>
        <MainRow>
          <ModeButton aria-label="Geometrie">
            <Icon n="select" s={7} />
            <Caret $right />
          </ModeButton>
          <ModeButton aria-label="Markierung">
            <Icon n="marquee" s={7} />
            <Caret $right />
          </ModeButton>
          <ModeButton $on aria-label="Schnellauswahl">
            <Icon n="timer" s={7} />
          </ModeButton>
          <ModeButton $tall aria-label="Pfeil">
            <Icon n="cursor" s={7} />
            <Caret $right />
          </ModeButton>
        </MainRow>
      </MainTools>
      <Workspace>
        <DrawArea>
          <DrawRow>
            <LeftPalette />
            <Canvas />
          </DrawRow>
          <Hint>
            Klicken Sie mit dem Cursor auf ein Element oder ziehen Sie einen Auswahlbereich auf. Drücken Sie für Morphbearbeitung
            Strg/Ctrl+Umsch, um zwischen Element-/Unterelement-Auswahl zu wechseln.
          </Hint>
        </DrawArea>
        <Renovation />
        <Navigator />
      </Workspace>
    </Page>
  );
}
